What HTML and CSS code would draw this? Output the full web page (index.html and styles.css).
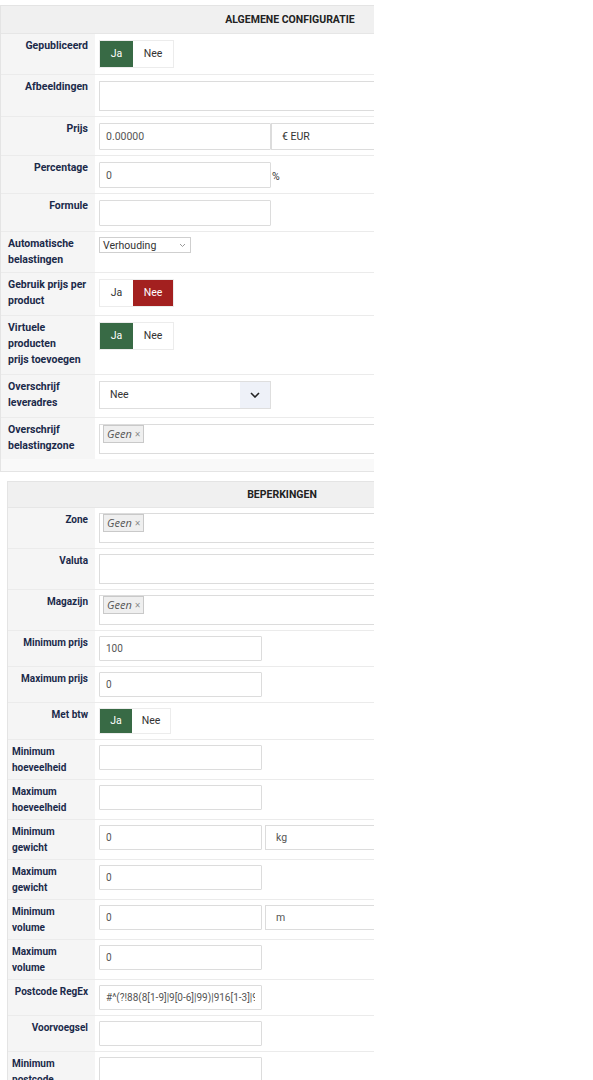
FILE: index.html
```html
<!DOCTYPE html>
<html>
<head>
    <meta charset="UTF-8">
    <meta name="viewport" content="width=device-width, initial-scale=1.0">
    <title>Verzendmethode</title>
    <link rel="stylesheet" href="styles.css">
</head>
<body>
<div class="page">

    <!-- algemene instellingen -->
    <div class="panel panel-main">
        <table class="paramlist">
            <tr><th colspan="2" class="panel-title">Algemene configuratie</th></tr>
            <tr>
                <td class="key"><label>Gepubliceerd</label></td>
                <td class="val val-loose">
                    <div class="toggle"><span class="opt yes active">Ja</span><span class="opt">Nee</span></div>
                </td>
            </tr>
            <tr>
                <td class="key"><label>Afbeeldingen</label></td>
                <td class="val"><div class="box box-wide"></div></td>
            </tr>
            <tr>
                <td class="key"><label>Prijs</label></td>
                <td class="val">
                    <div class="inline">
                        <input class="field" type="text" value="0.00000">
                        <div class="addon">€ EUR</div>
                    </div>
                </td>
            </tr>
            <tr>
                <td class="key"><label>Percentage</label></td>
                <td class="val">
                    <div class="inline">
                        <input class="field field-s" type="text" value="0">
                        <span class="unit">%</span>
                    </div>
                </td>
            </tr>
            <tr>
                <td class="key"><label>Formule</label></td>
                <td class="val"><input class="field field-s" type="text" value=""></td>
            </tr>
            <tr>
                <td class="key"><label>Automatische belastingen</label></td>
                <td class="val val-tight">
                    <div class="mini-select">
                        <span>Verhouding</span>
                        <svg width="7" height="5" viewBox="0 0 7 5"><path d="M1 1l2.5 2.5L6 1" fill="none" stroke="#999" stroke-width="1"/></svg>
                    </div>
                </td>
            </tr>
            <tr>
                <td class="key key-loose"><label>Gebruik prijs per product</label></td>
                <td class="val">
                    <div class="toggle"><span class="opt">Ja</span><span class="opt no active">Nee</span></div>
                </td>
            </tr>
            <tr>
                <td class="key key-loose"><label>Virtuele producten<br>prijs toevoegen</label></td>
                <td class="val">
                    <div class="toggle"><span class="opt yes active">Ja</span><span class="opt">Nee</span></div>
                </td>
            </tr>
            <tr>
                <td class="key key-loose"><label>Overschrijf leveradres</label></td>
                <td class="val val-loose">
                    <div class="dropdown">
                        <span class="dropdown-text">Nee</span>
                        <span class="dropdown-arrow">
                            <svg width="10" height="6" viewBox="0 0 10 6"><path d="M1 1l4 4 4-4" fill="none" stroke="#222" stroke-width="1.6"/></svg>
                        </span>
                    </div>
                </td>
            </tr>
            <tr>
                <td class="key"><label>Overschrijf belastingzone</label></td>
                <td class="val">
                    <div class="box box-wide box-tags"><span class="tag">Geen <i>×</i></span></div>
                </td>
            </tr>
        </table>
    </div>

    <!-- beperkingen -->
    <div class="panel panel-limits">
        <table class="paramlist">
            <tr><th colspan="2" class="panel-title">Beperkingen</th></tr>
            <tr>
                <td class="key"><label>Zone</label></td>
                <td class="val"><div class="box box-wide box-tags"><span class="tag">Geen <i>×</i></span></div></td>
            </tr>
            <tr>
                <td class="key"><label>Valuta</label></td>
                <td class="val"><div class="box box-wide"></div></td>
            </tr>
            <tr>
                <td class="key"><label>Magazijn</label></td>
                <td class="val"><div class="box box-wide box-tags"><span class="tag">Geen <i>×</i></span></div></td>
            </tr>
            <tr>
                <td class="key"><label>Minimum prijs</label></td>
                <td class="val"><input class="field" type="text" value="100"></td>
            </tr>
            <tr>
                <td class="key"><label>Maximum prijs</label></td>
                <td class="val"><input class="field" type="text" value="0"></td>
            </tr>
            <tr>
                <td class="key"><label>Met btw</label></td>
                <td class="val">
                    <div class="toggle"><span class="opt yes active">Ja</span><span class="opt">Nee</span></div>
                </td>
            </tr>
            <tr>
                <td class="key"><label>Minimum hoeveelheid</label></td>
                <td class="val"><input class="field" type="text" value=""></td>
            </tr>
            <tr>
                <td class="key"><label>Maximum hoeveelheid</label></td>
                <td class="val"><input class="field" type="text" value=""></td>
            </tr>
            <tr>
                <td class="key"><label>Minimum gewicht</label></td>
                <td class="val">
                    <div class="inline">
                        <input class="field" type="text" value="0">
                        <div class="addon">kg</div>
                    </div>
                </td>
            </tr>
            <tr>
                <td class="key"><label>Maximum gewicht</label></td>
                <td class="val"><input class="field" type="text" value="0"></td>
            </tr>
            <tr>
                <td class="key"><label>Minimum volume</label></td>
                <td class="val">
                    <div class="inline">
                        <input class="field" type="text" value="0">
                        <div class="addon">m</div>
                    </div>
                </td>
            </tr>
            <tr>
                <td class="key"><label>Maximum volume</label></td>
                <td class="val"><input class="field" type="text" value="0"></td>
            </tr>
            <tr>
                <td class="key"><label>Postcode RegEx</label></td>
                <td class="val"><input class="field" type="text" value="#^(?!88(8[1-9]|9[0-6]|99)|916[1-3]|9[1-9][0-9])"></td>
            </tr>
            <tr>
                <td class="key"><label>Voorvoegsel</label></td>
                <td class="val"><input class="field" type="text" value=""></td>
            </tr>
            <tr>
                <td class="key"><label>Minimum postcode</label></td>
                <td class="val"><input class="field" type="text" value=""></td>
            </tr>
        </table>
    </div>

</div>
</body>
</html>
```

FILE: styles.css
```css
body {
    margin: 0;
    background: #fff;
    font-family: Roboto, "Liberation Sans", Arial, sans-serif;
    font-size: 10.5px;
    color: #333;
}
.page {
    width: 374px;
    overflow: hidden;
    padding-top: 5px;
}

/* panelen */
.panel {
    border: 1px solid #e4e4e4;
    background: #f9f9f9;
    padding-bottom: 12px;
}
.panel-main {
    width: 578px;
}
.panel-limits {
    width: 548px;
    margin: 9px 0 0 7px;
}
.paramlist {
    width: 100%;
    border-collapse: collapse;
}
.panel-title {
    height: 27px;
    padding: 0;
    background: #f0f0f0;
    border-bottom: 1px solid #e6e6e6;
    font-size: 10.5px;
    font-weight: bold;
    text-transform: uppercase;
    color: #222;
    text-align: center;
}
.panel-limits .panel-title {
    height: 25px;
}

/* rijen */
.paramlist td {
    border-bottom: 1px solid #ebebeb;
    vertical-align: top;
}
.paramlist tr:last-child td {
    border-bottom: none;
}
.key {
    width: 80px;
    padding: 4px 7px 4px 7px;
    background: #f5f5f5;
    text-align: right;
}
.key-loose {
    padding-bottom: 6px;
}
.panel-limits .key {
    width: 76px;
    padding: 4px 7px 3px 4px;
}
.key label {
    display: inline-block;
    text-align: left;
    font-weight: bold;
    line-height: 16px;
    color: #1b2a4a;
}
.panel-limits .key label {
    font-size: 10px;
}
.val {
    padding: 6px 4px 5px 4px;
    background: #fff;
}
.val-tight {
    padding-top: 5px;
}
.val-loose {
    padding-bottom: 6px;
}
.panel-limits .val {
    padding-top: 5px;
}

/* velden */
.inline {
    display: flex;
    align-items: center;
}
.field {
    box-sizing: border-box;
    width: 172px;
    height: 27px;
    margin: 0;
    padding: 0 6px;
    border: 1px solid #dcdcdc;
    border-radius: 1px;
    background: #fff;
    font: inherit;
    color: #555;
    outline: none;
}
.field-s {
    height: 26px;
}
.panel-limits .field {
    width: 163px;
    height: 25px;
    font-size: 10px;
}
.addon {
    box-sizing: border-box;
    width: 200px;
    height: 27px;
    line-height: 25px;
    padding-left: 10px;
    border: 1px solid #dcdcdc;
    background: #fff;
    color: #333;
}
.panel-limits .addon {
    margin-left: 3px;
    height: 25px;
    line-height: 23px;
    color: #555;
}
.unit {
    padding: 2px 0 0 1px;
}
.box {
    box-sizing: border-box;
    height: 30px;
    border: 1px solid #dcdcdc;
    background: #fff;
}
.box-wide {
    width: 100%;
}
.box-tags {
    padding: 0 3px;
}
.panel-limits .box {
    height: 30px;
}
.tag {
    display: inline-block;
    height: 16px;
    line-height: 15px;
    padding: 0 3px;
    border: 1px solid #c9c9c9;
    background: #efefef;
    font-family: "Open Sans", "DejaVu Sans", sans-serif;
    font-style: italic;
    font-size: 11px;
    color: #555;
}
.tag i {
    font-style: normal;
    font-size: 10px;
    color: #888;
}

/* ja/nee schakelaar */
.toggle {
    display: inline-flex;
    border: 1px solid #ececec;
}
.opt {
    width: 33px;
    height: 26px;
    line-height: 26px;
    text-align: center;
    color: #333;
    background: #fff;
}
.opt + .opt {
    width: 40px;
}
.opt.yes.active {
    background: #386a45;
    color: #fff;
}
.opt.no.active {
    background: #a3201f;
    color: #fff;
}
.panel-limits .opt {
    width: 32px;
    height: 24px;
    line-height: 24px;
}
.panel-limits .opt + .opt {
    width: 38px;
}

/* selecties */
.mini-select {
    box-sizing: border-box;
    display: flex;
    align-items: center;
    justify-content: space-between;
    width: 92px;
    height: 16px;
    padding: 0 4px 0 3px;
    border: 1px solid #cfcfcf;
    background: #fff;
    color: #333;
}
.dropdown {
    box-sizing: border-box;
    display: flex;
    width: 172px;
    height: 28px;
    border: 1px solid #dedede;
    background: #fff;
}
.dropdown-text {
    flex: 1;
    line-height: 26px;
    padding-left: 10px;
    color: #333;
}
.dropdown-arrow {
    width: 30px;
    display: flex;
    align-items: center;
    justify-content: center;
    background: #eef1f8;
}
```
